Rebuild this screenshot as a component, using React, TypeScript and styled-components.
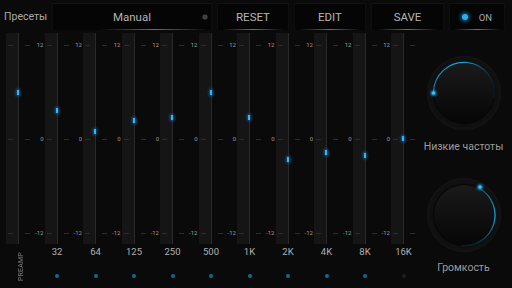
import { FC } from "react"
import styled, { createGlobalStyle } from "styled-components"

const GlobalStyle = createGlobalStyle`
    html, body {
        margin: 0;
        padding: 0;
        background: #0a0a0a;
    }
    body {
        font-family: Roboto, "Liberation Sans", sans-serif;
        -webkit-font-smoothing: antialiased;
    }
`

const Page = styled.div`
    width: 512px;
    height: 288px;
    overflow: hidden;
    background: #0a0a0a;
    display: flex;
    flex-direction: column;
`

// top bar
const TopBar = styled.div`
    height: 33px;
    box-sizing: border-box;
    padding: 3px 0 3px 0;
    display: flex;
    align-items: stretch;
    gap: 5px;
`

const PresetLabel = styled.div`
    width: 52px;
    margin-right: -5px;
    padding-left: 4px;
    box-sizing: border-box;
    display: flex;
    align-items: center;
    color: #a8a8a8;
    font-size: 10.5px;
`

const Glow = styled.div<{ $w?: number }>`
    position: relative;
    background: #050505;
    border-top: 1px solid #121212;
    box-shadow: inset 1px 0 0 #0e0e0e, inset -1px 0 0 #0e0e0e;
    box-sizing: border-box;
    display: flex;
    align-items: center;
    justify-content: center;
    color: #b4b4b4;
    font-size: 11.5px;
    width: ${({ $w }) => $w ?? 72}px;
    &::after {
        content: "";
        position: absolute;
        left: 8%;
        right: 8%;
        bottom: 0;
        height: 1px;
        background: linear-gradient(to right, rgba(20, 140, 185, 0), rgba(26, 150, 200, 0.9) 50%, rgba(20, 140, 185, 0));
    }
`

const PresetBox = styled(Glow)`
    &::after {
        left: 30%;
        right: 2%;
    }
`

const PresetDot = styled.span`
    position: absolute;
    right: 5px;
    top: 50%;
    margin-top: -2px;
    width: 4px;
    height: 4px;
    border-radius: 50%;
    background: #3c3c3c;
    box-shadow: 0 0 0 0.5px #555;
`

const OnLed = styled.span`
    width: 6px;
    height: 6px;
    border-radius: 50%;
    background: #1fb2f5;
    box-shadow: 0 0 4px 1px rgba(30, 170, 240, 0.7);
    margin-right: 11px;
`

const OnText = styled.span`
    font-size: 9.5px;
    color: #a8a8a8;
`

// eq area
const Main = styled.div`
    flex: 1;
    display: flex;
`

const EqArea = styled.div`
    width: 415px;
    padding-left: 6px;
    box-sizing: border-box;
    display: grid;
    grid-template-columns: repeat(11, 38.5px);
`

const Lane = styled.div`
    width: 25px;
    display: flex;
    flex-direction: column;
    align-items: center;
`

const Strip = styled.div`
    position: relative;
    align-self: flex-start;
    width: 13px;
    height: 211px;
    background: linear-gradient(to right, #151515 0 12px, #292929 12px 13px);
`

const Tick = styled.span<{ $y: number; $x: number }>`
    position: absolute;
    top: ${({ $y }) => $y}px;
    left: ${({ $x }) => $x}px;
    width: 5px;
    height: 1px;
    background: #2c2c2c;
`

const ScaleText = styled.span<{ $y: number }>`
    position: absolute;
    top: ${({ $y }) => $y - 4}px;
    right: 14px;
    font-size: 6px;
    line-height: 8px;
    color: #9a9a9a;
    white-space: nowrap;
`

const Thumb = styled.span`
    position: absolute;
    left: 11px;
    width: 2px;
    height: 5px;
    background: #27b8ff;
    box-shadow: 0 0 3px 1px rgba(20, 150, 230, 0.55);
`

const BandLabel = styled.div`
    margin-top: 3px;
    height: 10px;
    line-height: 10px;
    font-size: 9.5px;
    color: #b0b0b0;
`

const Dot = styled.span<{ $on: boolean }>`
    margin-top: 17px;
    width: 4px;
    height: 4px;
    border-radius: 50%;
    background: ${({ $on }) => ($on ? "#0b6d92" : "#1f1f1f")};
`

const PreampText = styled.div`
    margin-top: 8px;
    margin-left: 6px;
    writing-mode: vertical-rl;
    transform: rotate(180deg);
    font-size: 7px;
    line-height: 7px;
    color: #7a7a7a;
    letter-spacing: 0.2px;
`

// right panel
const Side = styled.div`
    flex: 1;
    display: flex;
    flex-direction: column;
    align-items: center;
    padding-top: 22px;
`

const KnobLabel = styled.div<{ $mt: number; $mb: number }>`
    margin-top: ${({ $mt }) => $mt}px;
    margin-bottom: ${({ $mb }) => $mb}px;
    font-size: 10.5px;
    line-height: 12px;
    color: #9c9c9c;
    white-space: nowrap;
`

const TOP_Y = 12
const ZERO_Y = 106
const LOW_Y = 200
const PX_PER_DB = (LOW_Y - TOP_Y) / 24

const bands = [
    { label: "32", value: 3.7, on: true },
    { label: "64", value: 0.9, on: true },
    { label: "125", value: 2.3, on: true },
    { label: "250", value: 2.8, on: true },
    { label: "500", value: 6, on: true },
    { label: "1K", value: 2.8, on: true },
    { label: "2K", value: -2.6, on: true },
    { label: "4K", value: -1.7, on: true },
    { label: "8K", value: -2.1, on: true },
    { label: "16K", value: 0.1, on: false },
]

const Slider: FC<{ value: number; scale: boolean }> = ({ value, scale }) => (
    <Strip>
        {[TOP_Y, ZERO_Y, LOW_Y].map(y => (
            <span key={y}>
                <Tick $y={y} $x={2} />
                <Tick $y={y} $x={19} />
            </span>
        ))}
        {scale && (
            <>
                <ScaleText $y={TOP_Y}>12</ScaleText>
                <ScaleText $y={ZERO_Y}>0</ScaleText>
                <ScaleText $y={LOW_Y}>-12</ScaleText>
            </>
        )}
        <Thumb style={{ top: ZERO_Y - value * PX_PER_DB - 2.5 }} />
    </Strip>
)

const Knob: FC<{ id: string; arc: string; dot: [number, number]; vertical?: boolean }> = ({ id, arc, dot, vertical }) => (
    <svg width="76" height="76" viewBox="0 0 76 76">
        <defs>
            <radialGradient id={`${id}-ring`} cx="50%" cy="50%" r="50%">
                <stop offset="80%" stopColor="#0d0d0d" />
                <stop offset="100%" stopColor="#121212" />
            </radialGradient>
            <linearGradient id={`${id}-face`} x1="0" y1="0" x2="0" y2="1">
                <stop offset="0" stopColor="#1a1a1a" />
                <stop offset="1" stopColor="#060606" />
            </linearGradient>
            {vertical ? (
                <linearGradient id={`${id}-arc`} x1="0" y1="0" x2="0" y2="1">
                    <stop offset="0" stopColor="#1a9fd6" stopOpacity="0.5" />
                    <stop offset="0.5" stopColor="#1aa8e0" stopOpacity="1" />
                    <stop offset="1" stopColor="#1a9fd6" stopOpacity="0.15" />
                </linearGradient>
            ) : (
                <linearGradient id={`${id}-arc`} x1="0" y1="0" x2="1" y2="0">
                    <stop offset="0" stopColor="#1a9fd6" stopOpacity="0.8" />
                    <stop offset="0.45" stopColor="#1aa8e0" stopOpacity="1" />
                    <stop offset="1" stopColor="#1a9fd6" stopOpacity="0.1" />
                </linearGradient>
            )}
            <filter id={`${id}-glow`} x="-2" y="-2" width="5" height="5">
                <feGaussianBlur stdDeviation="1.2" />
            </filter>
        </defs>
        <circle cx="38" cy="38" r="37" fill={`url(#${id}-ring)`} />
        <circle cx="38" cy="38" r="36.5" fill="none" stroke="#141414" strokeWidth="1" />
        <circle cx="38" cy="38" r="30.5" fill={`url(#${id}-face)`} />
        <circle cx="38" cy="38" r="30.5" fill="none" stroke="#050505" strokeWidth="1" />
        <path d={arc} fill="none" stroke={`url(#${id}-arc)`} strokeWidth="1.3" />
        <circle cx={dot[0]} cy={dot[1]} r="2.6" fill="#1fb0f5" filter={`url(#${id}-glow)`} />
        <circle cx={dot[0]} cy={dot[1]} r="1.6" fill="#35c2ff" />
    </svg>
)

const App: FC = () => (
    <Page>
        <GlobalStyle />
        <TopBar>
            <PresetLabel>Пресеты</PresetLabel>
            <PresetBox $w={160}>
                Manual
                <PresetDot />
            </PresetBox>
            <Glow $w={72}>RESET</Glow>
            <Glow $w={72}>EDIT</Glow>
            <Glow $w={73}>SAVE</Glow>
            <Glow $w={56}>
                <OnLed />
                <OnText>ON</OnText>
            </Glow>
        </TopBar>
        <Main>
            <EqArea>
                <Lane>
                    <Slider value={5.9} scale={false} />
                    <PreampText>PREAMP</PreampText>
                </Lane>
                {bands.map(band => (
                    <Lane key={band.label}>
                        <Slider value={band.value} scale />
                        <BandLabel>{band.label}</BandLabel>
                        <Dot $on={band.on} />
                    </Lane>
                ))}
            </EqArea>
            <Side>
                <Knob id="bass" arc="M 7.5 38 A 30.5 30.5 0 1 1 68 43.3" dot={[7.5, 38]} />
                <KnobLabel $mt={10} $mb={24}>Низкие частоты</KnobLabel>
                <Knob id="vol" arc="M 53.5 11.5 A 30.5 30.5 0 0 1 35.3 68.4" dot={[54, 10]} vertical />
                <KnobLabel $mt={9} $mb={0}>Громкость</KnobLabel>
            </Side>
        </Main>
    </Page>
)

export default App
